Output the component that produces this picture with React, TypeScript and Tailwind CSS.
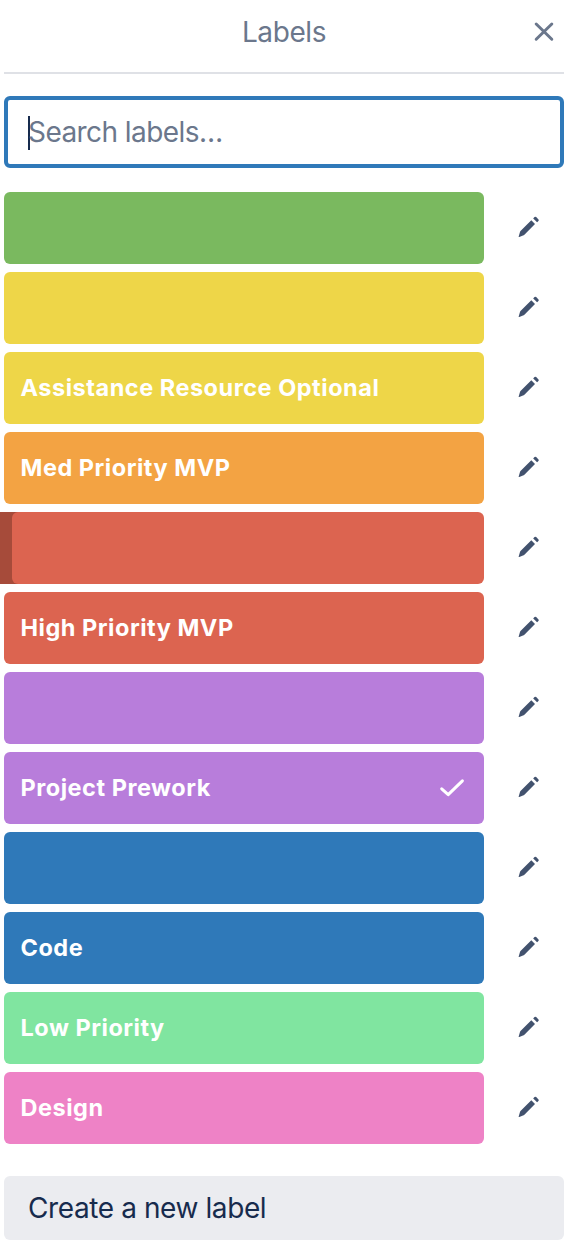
type Label = { name: string; color: string; selected?: boolean; focused?: boolean };

const labels: Label[] = [
  { name: "", color: "bg-[#7ab95f]" },
  { name: "", color: "bg-[#eed648]" },
  { name: "Assistance Resource Optional", color: "bg-[#eed648]" },
  { name: "Med Priority MVP", color: "bg-[#f3a343]" },
  { name: "", color: "bg-[#dc6450]", focused: true },
  { name: "High Priority MVP", color: "bg-[#dc6450]" },
  { name: "", color: "bg-[#b87ddb]" },
  { name: "Project Prework", color: "bg-[#b87ddb]", selected: true },
  { name: "", color: "bg-[#2f79b9]" },
  { name: "Code", color: "bg-[#2f79b9]" },
  { name: "Low Priority", color: "bg-[#80e5a0]" },
  { name: "Design", color: "bg-[#ee82c6]" },
];

function PencilIcon() {
  return (
    <svg className="size-8" viewBox="0 0 32 32" fill="#42526e">
      <path d="M19.3 8.3 23 12 12.4 22.7Q11.8 23.3 11 23.6L7.3 25Q6.4 25.3 6.7 24.4L7.9 20.3Q8.2 19.3 9 18.5Z" />
      <path d="M21.2 6.4 22.5 5.1Q23.3 4.4 24.2 5.1L26.5 7.4Q27.2 8.3 26.4 9.1L25.1 10.3Z" />
    </svg>
  );
}

function CheckIcon() {
  return (
    <svg className="size-8" viewBox="0 0 32 32" fill="none" stroke="#fff" strokeWidth="3" strokeLinecap="round" strokeLinejoin="round">
      <path d="M5.7 16.8 12.2 22.7 26.4 8.9" />
    </svg>
  );
}

function LabelRow({ label }: { label: Label }) {
  return (
    <li className="flex h-[72px] items-center">
      <div className={`relative flex h-full w-[480px] items-center rounded-[6px] pr-4 pl-4 ${label.color}`}>
        {label.focused && (
          <span className="absolute inset-y-0 -left-1 w-5 bg-[#a64b3a]">
            <span className={`absolute inset-y-0 left-3 w-3 rounded-l-[6px] ${label.color}`} />
          </span>
        )}
        <span className="flex-1 pl-[0.5px] text-[23.5px] leading-8 font-bold tracking-[0.52px] whitespace-nowrap text-white">{label.name}</span>
        {label.selected && <CheckIcon />}
      </div>
      <button className="ml-7 flex" aria-label="Edit label">
        <PencilIcon />
      </button>
    </li>
  );
}

export default function App() {
  return (
    <main className="h-[1246px] w-[588px] overflow-hidden bg-white pl-1 font-['Inter',sans-serif] text-[28px]">
      <header className="flex h-[74px] w-[560px] items-start border-b-2 border-[#dfe1e6] text-[#6b778c]">
        <h1 className="flex-1 pt-3 pl-[60px] text-center leading-10 tracking-[-0.4px]">Labels</h1>
        <button className="flex w-[60px] justify-center pt-4 pl-[20px]" aria-label="Close">
          <svg className="size-8" viewBox="0 0 32 32" fill="none" stroke="currentColor" strokeWidth="3" strokeLinecap="round">
            <path d="M8.2 8 23.8 23.2M23.8 8 8.2 23.2" />
          </svg>
        </button>
      </header>
      <div className="mt-[22px] flex h-[72px] w-[560px] items-center rounded-[6px] border-4 border-[#2f79b9] pl-5">
        <span className="mt-0.5 -mr-0.5 h-[34px] w-0.5 bg-[#172b4d]" />
        <span className="leading-10 tracking-[-0.57px] text-[#6b778c]">Search labels…</span>
      </div>
      <ul className="mt-6 flex flex-col gap-2">
        {labels.map((label, index) => (
          <LabelRow key={index} label={label} />
        ))}
      </ul>
      <button className="mt-8 flex h-16 w-[560px] items-center rounded-[6px] bg-[#ebecf0] pl-6 tracking-[-0.4px] text-[#172b4d]">
        Create a new label
      </button>
    </main>
  );
}
